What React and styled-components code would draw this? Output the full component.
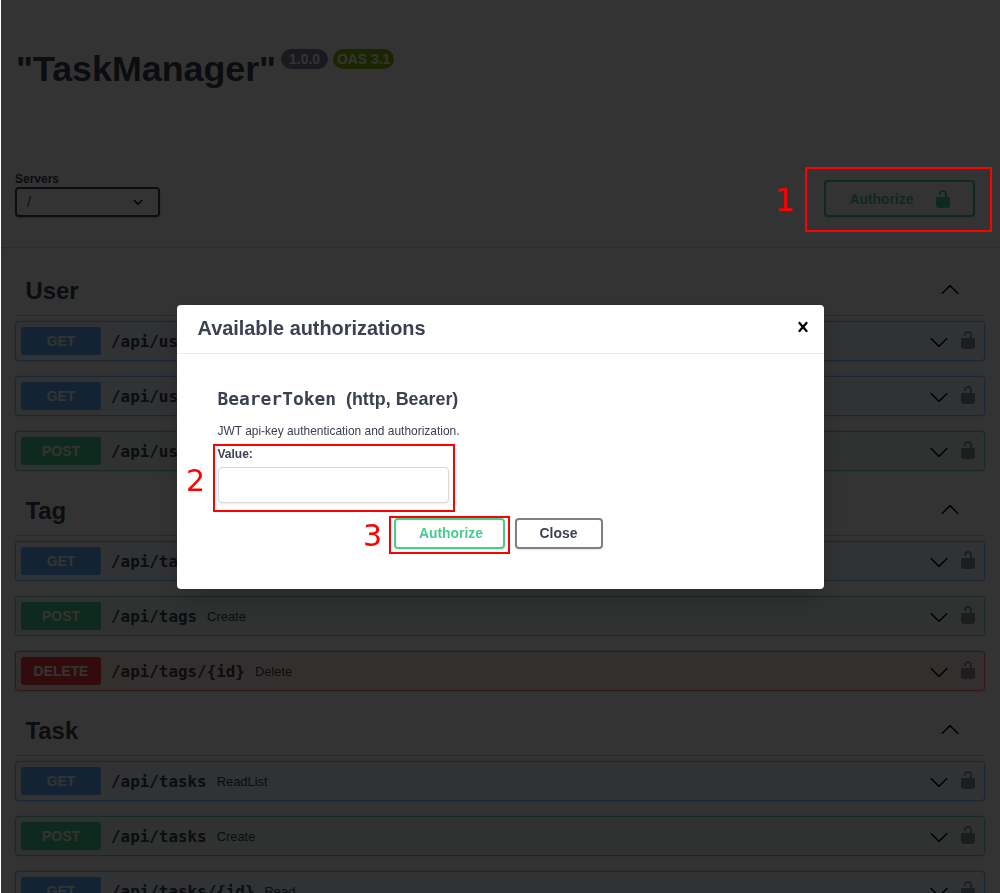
import React from "react";
import styled, { createGlobalStyle } from "styled-components";

const GlobalStyle = createGlobalStyle`
  html, body {
    margin: 0;
    height: 100%;
    overflow: hidden;
    background: #fff;
    font-family: "Liberation Sans", Arial, sans-serif;
    color: #3b4151;
  }
`;

const METHOD_COLORS = {
  GET: "97, 175, 254",
  POST: "73, 204, 144",
  DELETE: "249, 62, 62",
};

const LOCK_PATH =
  "M15.8 8H14V5.6C14 2.703 12.665 1 10 1 7.334 1 6 2.703 6 5.6V6h2v-.801C8 3.754 8.797 3 10 3c1.203 0 2 .754 2 2.199V8H4c-.553 0-1 .646-1 1.199V17c0 .549.428 1.139.951 1.307l1.197.387C5.672 18.861 6.55 19 7.1 19h5.8c.549 0 1.428-.139 1.951-.307l1.196-.387c.524-.167.953-.757.953-1.306V9.199C17 8.646 16.352 8 15.8 8z";
const CHEVRON_PATH =
  "M17.418 6.109c.272-.268.709-.268.979 0s.271.701 0 .969l-7.908 7.83c-.27.268-.707.268-.979 0l-7.908-7.83c-.27-.268-.27-.701 0-.969.271-.268.709-.268.979 0L10 13.25l7.418-7.141z";
const SMALL_CHEVRON_PATH =
  "M13.418 7.859c.271-.268.709-.268.978 0 .27.268.272.701 0 .969l-3.908 3.83c-.27.268-.707.268-.979 0l-3.908-3.83c-.27-.268-.27-.701 0-.969.271-.268.709-.268.978 0L10 11l3.418-3.141z";
const CLOSE_PATH =
  "M14.348 14.849c-.469.469-1.229.469-1.697 0L10 11.819l-2.651 3.029c-.469.469-1.229.469-1.697 0-.469-.469-.469-1.229 0-1.697l2.758-3.15-2.759-3.152c-.469-.469-.469-1.228 0-1.697.469-.469 1.228-.469 1.697 0L10 8.183l2.651-3.031c.469-.469 1.228-.469 1.697 0 .469.469.469 1.229 0 1.697l-2.758 3.152 2.758 3.15c.469.469.469 1.229 0 1.698z";

const Page = styled.div`
  height: 893px;
  overflow: hidden;
`;

const InfoBlock = styled.div`
  box-sizing: border-box;
  height: 167px;
  padding: 48px 15px 0 16px;
  display: flex;
  align-items: flex-start;
  gap: 5px;
`;

const Title = styled.h1`
  margin: 0;
  font-size: 35.8px;
  line-height: 42px;
  font-weight: 700;
  color: #3b4151;
`;

const Stamps = styled.div`
  display: flex;
  gap: 5px;
  padding-top: 1px;
`;

const Stamp = styled.span`
  box-sizing: border-box;
  height: 20px;
  padding: 0 ${(p) => p.$pad}px;
  border-radius: 57px;
  background: ${(p) => p.$color};
  color: #fff;
  font-size: 13.9px;
  line-height: 20px;
  font-weight: 700;
`;

const SchemeBar = styled.div`
  box-sizing: border-box;
  height: 80px;
  padding: 5px 25px 0 15px;
  display: flex;
  justify-content: space-between;
  background: #fff;
  box-shadow: 0 1px 2px rgba(0, 0, 0, 0.15);
`;

const ServerBlock = styled.div`
  display: flex;
  flex-direction: column;
`;

const ServerLabel = styled.span`
  font-size: 12px;
  line-height: 15px;
  font-weight: 700;
`;

const ServerSelect = styled.div`
  box-sizing: border-box;
  width: 145px;
  height: 30px;
  padding: 0 10px;
  display: flex;
  align-items: center;
  justify-content: space-between;
  border: 2px solid #41444e;
  border-radius: 4px;
  box-shadow: 0 1px 2px rgba(0, 0, 0, 0.25);
  font-size: 14px;
  font-weight: 400;
`;

const OutlineButton = styled.button`
  box-sizing: border-box;
  height: ${(p) => p.$height}px;
  width: ${(p) => p.$width}px;
  padding: 0 0 0 ${(p) => p.$shift || 0}px;
  display: flex;
  align-items: center;
  justify-content: center;
  background: transparent;
  border: 2px solid ${(p) => p.$color};
  border-radius: 4px;
  box-shadow: 0 1px 2px rgba(0, 0, 0, 0.1);
  color: ${(p) => p.$text || p.$color};
  font-family: inherit;
  font-size: 13.9px;
  font-weight: 700;
`;

const TopAuthorize = styled(OutlineButton)`
  margin-top: 8px;
  gap: 19px;
`;

const Sections = styled.div`
  padding: 19px 15px 0;
`;

const Section = styled.section`
  padding-top: 1px;
`;

const SectionHeader = styled.div`
  box-sizing: border-box;
  height: 49px;
  margin-bottom: 5px;
  padding: 0 25px 0 10.5px;
  display: flex;
  align-items: center;
  justify-content: space-between;
  border-bottom: 1px solid rgba(59, 65, 81, 0.3);
`;

const SectionTitle = styled.h3`
  margin: 0;
  font-size: 23.9px;
  font-weight: 700;
  color: #3b4151;
`;

const Row = styled.div`
  box-sizing: border-box;
  height: 40px;
  margin-bottom: 15px;
  padding: 5px;
  display: flex;
  align-items: center;
  border: 1px solid rgba(${(p) => p.$rgb}, 0.75);
  border-radius: 4px;
  background: rgba(${(p) => p.$rgb}, 0.1);
  box-shadow: 0 0 3px rgba(0, 0, 0, 0.19);
`;

const Method = styled.span`
  flex: none;
  width: 80px;
  height: 28px;
  margin-right: 10px;
  border-radius: 3px;
  background: rgb(${(p) => p.$rgb});
  color: #fff;
  font-size: 13.9px;
  line-height: 28px;
  font-weight: 700;
  text-align: center;
`;

const Path = styled.span`
  font-family: "DejaVu Sans Mono", monospace;
  font-size: 15.9px;
  font-weight: 600;
  color: #3b4151;
`;

const Summary = styled.span`
  margin-left: 10px;
  flex: 1;
  font-size: 12.9px;
  color: #3b4151;
`;

const Icon = styled.svg`
  flex: none;
  display: block;
  fill: ${(p) => p.$fill || "#000"};
`;

const CollapseIcon = styled(Icon)`
  margin-bottom: 2px;
  transform: rotate(180deg);
`;

const RowChevron = styled(Icon)`
  margin-top: 2px;
`;

const RowLock = styled(Icon)`
  margin-bottom: 2px;
  opacity: 0.4;
`;

const RowIcons = styled.div`
  display: flex;
  align-items: center;
  gap: 9px;
  margin-right: 1px;
`;

const Overlay = styled.div`
  position: fixed;
  inset: 0 0 0 1px;
  display: flex;
  align-items: center;
  justify-content: center;
  background: rgba(0, 0, 0, 0.8);
`;

const Modal = styled.div`
  box-sizing: border-box;
  width: 647px;
  height: 284px;
  margin-left: -1px;
  border-radius: 4px;
  background: #fff;
  box-shadow: 0 10px 30px rgba(0, 0, 0, 0.2);
`;

const ModalHeader = styled.div`
  box-sizing: border-box;
  height: 49px;
  padding: 0 11px 3px 21px;
  display: flex;
  align-items: center;
  justify-content: space-between;
  border-bottom: 1px solid #ebebeb;
`;

const ModalTitle = styled.h3`
  margin: 3px 0 0;
  font-size: 19.9px;
  font-weight: 700;
  color: #3b4151;
`;

const ModalBody = styled.div`
  padding: 34px 41px 0;
`;

const SchemeName = styled.h4`
  margin: 0 0 14px;
  font-size: 17.9px;
  line-height: 22px;
  font-weight: 600;
  color: #3b4151;
`;

const SchemeCode = styled.code`
  font-family: "DejaVu Sans Mono", monospace;
  font-size: 17.9px;
  margin-right: 10px;
`;

const SchemeText = styled.p`
  margin: 0 0 8px;
  font-size: 11.95px;
  line-height: 15px;
`;

const ValueLabel = styled.label`
  display: block;
  margin-bottom: 5px;
  font-size: 12px;
  line-height: 15px;
  font-weight: 700;
`;

const ValueInput = styled.input`
  display: block;
  box-sizing: border-box;
  width: 231px;
  height: 36px;
  padding: 8px 10px;
  border: 1px solid #d9d9d9;
  border-radius: 4px;
  background: #fff;
  outline: none;
  box-shadow: 0 1px 2px rgba(0, 0, 0, 0.08);
`;

const ButtonRow = styled.div`
  margin-top: 15px;
  padding-right: 4px;
  display: flex;
  justify-content: center;
  gap: 10px;
`;

const Annotation = styled.div`
  position: fixed;
  box-sizing: border-box;
  left: ${(p) => p.$x}px;
  top: ${(p) => p.$y}px;
  width: ${(p) => p.$w}px;
  height: ${(p) => p.$h}px;
  border: 2px solid #ff0000;
`;

const AnnotationNumber = styled.span`
  position: fixed;
  left: ${(p) => p.$x}px;
  top: ${(p) => p.$y}px;
  font-family: "DejaVu Sans", sans-serif;
  font-size: ${(p) => p.$size}px;
  line-height: 38px;
  color: #ff0000;
`;

const sections = [
  {
    name: "User",
    rows: [
      ["GET", "/api/users", "ReadList"],
      ["GET", "/api/users/{id}", "Read"],
      ["POST", "/api/users", "Create"],
    ],
  },
  {
    name: "Tag",
    rows: [
      ["GET", "/api/tags", "ReadList"],
      ["POST", "/api/tags", "Create"],
      ["DELETE", "/api/tags/{id}", "Delete"],
    ],
  },
  {
    name: "Task",
    rows: [
      ["GET", "/api/tasks", "ReadList"],
      ["POST", "/api/tasks", "Create"],
      ["GET", "/api/tasks/{id}", "Read"],
    ],
  },
];

function App() {
  return (
    <>
      <GlobalStyle />
      <Page>
        <InfoBlock>
          <Title>"TaskManager"</Title>
          <Stamps>
            <Stamp $color="#7d8492" $pad={8}>1.0.0</Stamp>
            <Stamp $color="#89bf04" $pad={4}>OAS 3.1</Stamp>
          </Stamps>
        </InfoBlock>
        <SchemeBar>
          <ServerBlock>
            <ServerLabel>Servers</ServerLabel>
            <ServerSelect>
              <span>/</span>
              <Icon viewBox="0 0 20 20" width={20} height={20}>
                <path d={SMALL_CHEVRON_PATH} />
              </Icon>
            </ServerSelect>
          </ServerBlock>
          <TopAuthorize $width={151} $height={37} $shift={3} $color="#49cc90">
            Authorize
            <Icon viewBox="0 0 20 20" width={20} height={20} $fill="#49cc90">
              <path d={LOCK_PATH} />
            </Icon>
          </TopAuthorize>
        </SchemeBar>
        <Sections>
          {sections.map((section) => (
            <Section key={section.name}>
              <SectionHeader>
                <SectionTitle>{section.name}</SectionTitle>
                <CollapseIcon viewBox="0 0 20 20" width={20} height={20}>
                  <path d={CHEVRON_PATH} />
                </CollapseIcon>
              </SectionHeader>
              {section.rows.map(([method, path, summary]) => (
                <Row key={method + path} $rgb={METHOD_COLORS[method]}>
                  <Method $rgb={METHOD_COLORS[method]}>{method}</Method>
                  <Path>{path}</Path>
                  <Summary>{summary}</Summary>
                  <RowIcons>
                    <RowChevron viewBox="0 0 20 20" width={20} height={20}>
                      <path d={CHEVRON_PATH} />
                    </RowChevron>
                    <RowLock viewBox="0 0 20 20" width={20} height={20}>
                      <path d={LOCK_PATH} />
                    </RowLock>
                  </RowIcons>
                </Row>
              ))}
            </Section>
          ))}
        </Sections>
      </Page>
      <Overlay>
        <Modal>
          <ModalHeader>
            <ModalTitle>Available authorizations</ModalTitle>
            <Icon viewBox="0 0 20 20" width={20} height={20}>
              <path d={CLOSE_PATH} />
            </Icon>
          </ModalHeader>
          <ModalBody>
            <SchemeName>
              <SchemeCode>BearerToken</SchemeCode>(http, Bearer)
            </SchemeName>
            <SchemeText>JWT api-key authentication and authorization.</SchemeText>
            <ValueLabel>Value:</ValueLabel>
            <ValueInput type="text" />
            <ButtonRow>
              <OutlineButton $width={111} $height={31} $shift={4} $color="#49cc90">
                Authorize
              </OutlineButton>
              <OutlineButton $width={88} $height={31} $color="#808080" $text="#3b4151">
                Close
              </OutlineButton>
            </ButtonRow>
          </ModalBody>
        </Modal>
      </Overlay>
      <Annotation $x={805} $y={167} $w={187} $h={65} />
      <Annotation $x={213} $y={444} $w={242} $h={68} />
      <Annotation $x={389} $y={516} $w={121} $h={38} />
      <AnnotationNumber $x={775} $y={181} $size={32}>1</AnnotationNumber>
      <AnnotationNumber $x={186} $y={462} $size={30}>2</AnnotationNumber>
      <AnnotationNumber $x={363} $y={517} $size={30}>3</AnnotationNumber>
    </>
  );
}

export default App;
